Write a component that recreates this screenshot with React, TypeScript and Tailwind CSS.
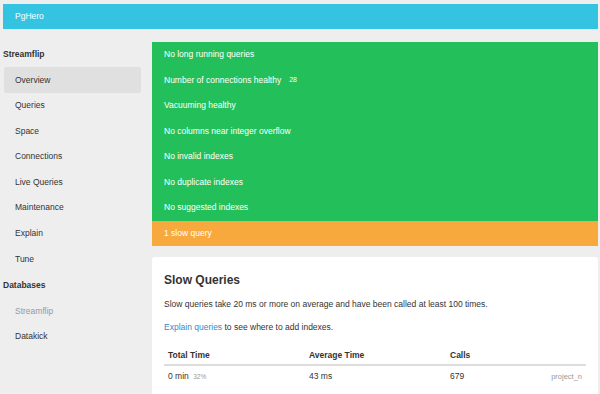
import React from 'react';

const checks = [
  { text: 'No long running queries' },
  { text: 'Number of connections healthy', extra: '28' },
  { text: 'Vacuuming healthy' },
  { text: 'No columns near integer overflow' },
  { text: 'No invalid indexes' },
  { text: 'No duplicate indexes' },
  { text: 'No suggested indexes' },
];

const navItems = ['Overview', 'Queries', 'Space', 'Connections', 'Live Queries', 'Maintenance', 'Explain', 'Tune'];

const App: React.FC = () => {
  return (
    <div
      className="min-h-[394px] h-[394px] overflow-hidden bg-[#eeeeee] pt-[4px] pl-[3px] pr-[2px] text-[8.5px] text-[#333333]"
      style={{ fontFamily: '"Liberation Sans", Arial, sans-serif' }}
    >
      <div className="h-[25px] bg-[#34c4e2] flex items-center pl-[12px] text-white">PgHero</div>

      <div className="flex mt-[12.5px]">
        {/* sidebar */}
        <div className="w-[149px] shrink-0">
          <div className="h-[25.6px] flex items-center font-bold">Streamflip</div>
          {navItems.map((item) => (
            <div
              key={item}
              className={`h-[25.6px] w-[137px] ml-[1px] flex items-center pl-[11px] rounded-[2px] ${
                item === 'Overview' ? 'bg-[#e0e0e0]' : ''
              }`}
            >
              {item}
            </div>
          ))}
          <div className="h-[25.6px] mt-[1px] flex items-center font-bold">Databases</div>
          <div className="h-[25.6px] flex items-center pl-[12px] text-[#999999]">Streamflip</div>
          <div className="h-[25.6px] flex items-center pl-[12px]">Datakick</div>
        </div>

        {/* main */}
        <div className="flex-1">
          <div className="text-white">
            {checks.map((c) => (
              <div key={c.text} className="h-[25.6px] bg-[#23bf5b] flex items-center pl-[12px]">
                {c.text}
                {c.extra && <span className="ml-[8px] text-[7px]">{c.extra}</span>}
              </div>
            ))}
            <div className="h-[25.6px] bg-[#f7a93e] flex items-center pl-[12px]">1 slow query</div>
          </div>

          <div className="mt-[11px] bg-white rounded-[3px] px-[12px] pt-[14px] pb-[20px]">
            <div className="text-[12px] font-bold h-[18px] flex items-center">Slow Queries</div>
            <p className="mt-[10px] leading-[10px]">
              Slow queries take 20 ms or more on average and have been called at least 100 times.
            </p>
            <p className="mt-[13px] leading-[10px]">
              <span className="text-[#3a88c8]">Explain queries</span> to see where to add indexes.
            </p>
            <div className="mt-[14px]">
              <div className="grid grid-cols-[141px_141px_1fr] font-bold border-b-[2px] border-[#dddddd] h-[20px] items-center">
                <div className="pl-[4px]">Total Time</div>
                <div className="pl-[4px]">Average Time</div>
                <div className="pl-[4px]">Calls</div>
              </div>
              <div className="grid grid-cols-[141px_141px_1fr] h-[20px] items-center">
                <div className="pl-[4px]">
                  0 min <span className="ml-[2px] text-[6.5px] text-[#999999]">32%</span>
                </div>
                <div className="pl-[4px]">43 ms</div>
                <div className="pl-[4px] pr-[4px] flex justify-between items-center">
                  <span>679</span>
                  <span className="text-[7.5px] text-[#999999]">project_n</span>
                </div>
              </div>
            </div>
          </div>
        </div>
      </div>
    </div>
  );
};

export default App;
